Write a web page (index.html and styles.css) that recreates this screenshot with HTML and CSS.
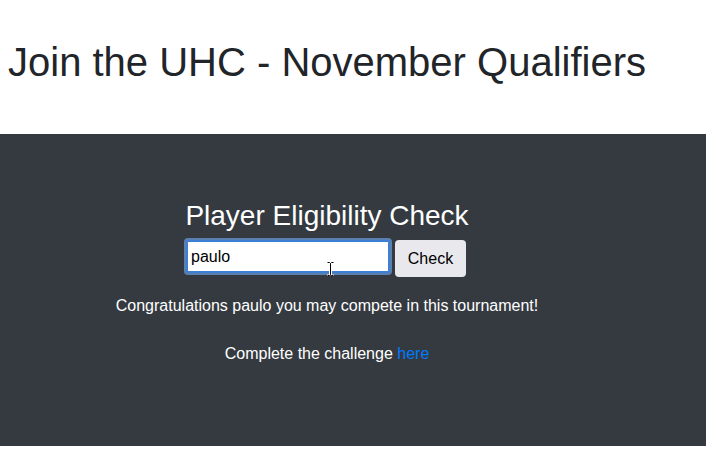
FILE: index.html
```html
<!DOCTYPE html>
<html>
<head>
<meta charset="utf-8">
<link rel="stylesheet" href="styles.css">
</head>
<body>
<header class="top">
  <h1 class="title">Join the UHC - November Qualifiers</h1>
</header>
<section class="dark">
  <div class="inner">
    <h3 class="sub">Player Eligibility Check</h3>
    <form class="check">
      <input class="name" type="text" value="paulo">
      <button class="btn" type="button">Check</button>
    </form>
    <p class="msg">Congratulations paulo you may compete in this tournament!</p>
    <p class="msg">Complete the challenge <a class="link" href="#">here</a></p>
    <svg class="cursor" width="9" height="16" viewBox="0 0 9 16"><path d="M1 1h2.5L4.5 2 5.5 1H8v1.5H6V13.5h2V15H5.5l-1-1-1 1H1v-1.5h2V2.5H1z" fill="#fff"/><path d="M1.5 1.5h2l1 1 1-1h2M4.5 2.5v11M1.5 14.5h2l1-1 1 1h2" stroke="#000" stroke-width="1" fill="none"/></svg>
  </div>
</section>
</body>
</html>
```
FILE: styles.css
```css
html, body {
  margin: 0;
  padding: 0;
  background: #fff;
  font-family: "Liberation Sans", Arial, sans-serif;
  color: #212529;
}
.top {
  padding: 38px 8px 48px 8px;
}
.title {
  margin: 0;
  font-size: 40px;
  font-weight: 400;
  line-height: 48px;
}
.dark {
  background: #343a40;
  height: 312px;
  box-sizing: border-box;
  padding-top: 65px;
}
.inner {
  width: 654px;
  text-align: center;
  color: #fff;
  position: relative;
}
.sub {
  margin: 0;
  font-size: 28px;
  font-weight: 400;
  line-height: 34px;
}
.check {
  margin: 7px 0 0 0;
  padding-right: 2px;
  display: flex;
  justify-content: center;
  align-items: flex-start;
  gap: 5px;
}
.name {
  box-sizing: border-box;
  width: 204px;
  height: 33px;
  border: 2px solid #3d7fd6;
  border-radius: 2px;
  box-shadow: 0 0 0 2px #5b7fae;
  outline: none;
  padding: 0 3px;
  font-family: "Liberation Sans", Arial, sans-serif;
  font-size: 16px;
  color: #000;
  background: #fff;
}
.btn {
  box-sizing: border-box;
  width: 71px;
  height: 37px;
  border: none;
  border-radius: 4px;
  background: #e9e9ed;
  font-family: "Liberation Sans", Arial, sans-serif;
  font-size: 16px;
  color: #000;
  padding: 0;
}
.msg {
  margin: 17px 0 0 0;
  font-size: 16px;
  line-height: 24px;
}
.msg + .msg {
  margin-top: 24px;
}
.link {
  color: #007bff;
  text-decoration: none;
}
.cursor {
  position: absolute;
  left: 326px;
  top: 62px;
}
```
